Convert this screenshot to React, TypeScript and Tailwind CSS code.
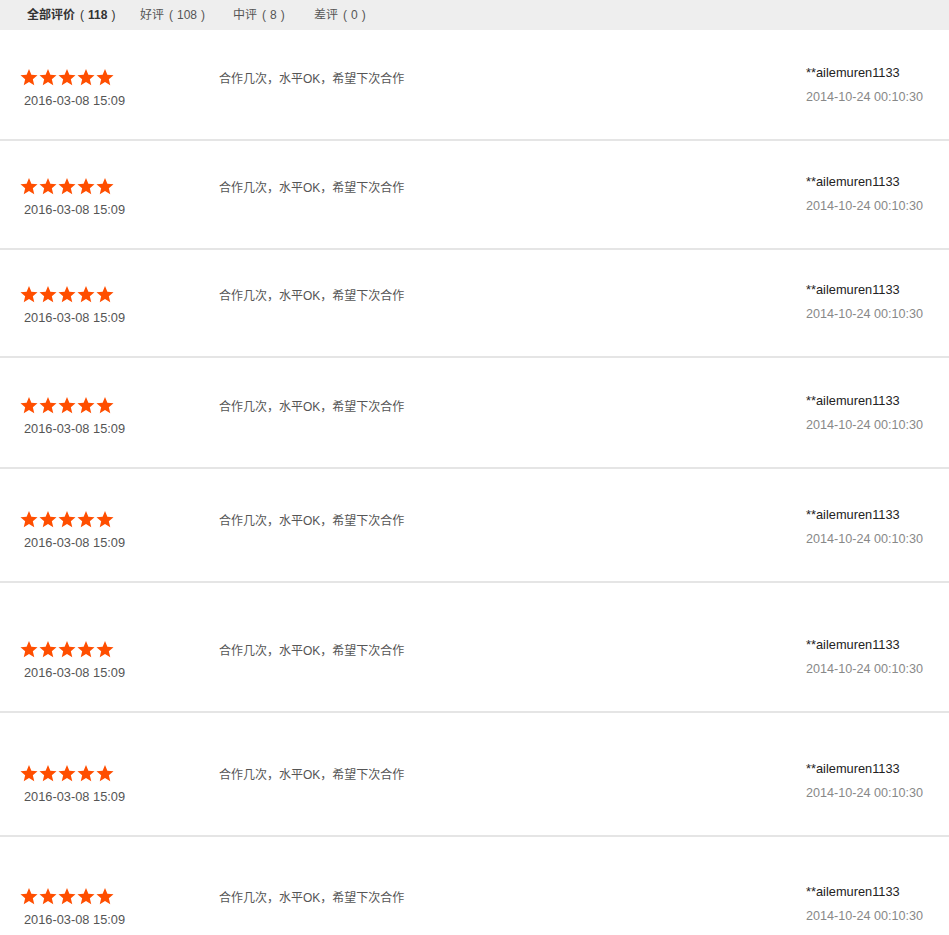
import React from "react";

const rows = [
  { h: "h-[111px]", pt: "pt-[34px]" },
  { h: "h-[109px]", pt: "pt-[32px]" },
  { h: "h-[108px]", pt: "pt-[31px]" },
  { h: "h-[111px]", pt: "pt-[34px]" },
  { h: "h-[114px]", pt: "pt-[37px]" },
  { h: "h-[130px]", pt: "pt-[53px]" },
  { h: "h-[124px]", pt: "pt-[47px]" },
  { h: "h-[124px]", pt: "pt-[46px]" },
];

const tabs = [
  { label: "全部评价", count: "118", w: "w-[113px]", active: true },
  { label: "好评", count: "108", w: "w-[93px]", active: false },
  { label: "中评", count: "8", w: "w-[81px]", active: false },
  { label: "差评", count: "0", w: "w-[80px]", active: false },
];

function Star() {
  return (
    <svg viewBox="0 0 20 19" className="w-[18px] h-[17px]">
      <polygon
        fill="#ff4e00"
        points="10,0 12.65,6.36 19.51,6.91 14.28,11.39 15.88,18.09 10,14.5 4.12,18.09 5.72,11.39 0.49,6.91 7.35,6.36"
      />
    </svg>
  );
}

export default function App() {
  return (
    <div
      className="w-[949px] min-h-screen bg-white overflow-hidden"
      style={{ fontFamily: '"Liberation Sans", "Noto Sans CJK SC", sans-serif' }}
    >
      {/* tabs */}
      <div className="h-[30px] bg-[#eeeeee] flex items-center pl-[27px] text-[12px] text-[#555]">
        {tabs.map((t) => (
          <span
            key={t.label}
            className={`${t.w} whitespace-nowrap ${t.active ? "font-bold text-[#333]" : ""}`}
          >
            {t.label}
            <span className="ml-[5px] mr-[4px] font-normal">(</span>
            {t.count}
            <span className="ml-[4px] font-normal">)</span>
          </span>
        ))}
      </div>

      {rows.map((r, i) => (
        <div
          key={i}
          className={`${r.h} ${r.pt} border-b-2 border-[#e5e5e5] flex items-start`}
        >
          <div className="w-[219px] pl-5 mt-[5px] flex-none">
            <div className="flex gap-px">
              <Star />
              <Star />
              <Star />
              <Star />
              <Star />
            </div>
            <div className="mt-[7px] ml-1 text-[12.8px] leading-4 text-[#555]">
              2016-03-08 15:09
            </div>
          </div>
          <div className="flex-1 mt-[7px] text-[12px] leading-4 text-[#555]">
            合作几次，水平OK，希望下次合作
          </div>
          <div className="w-[143px] flex-none mt-px">
            <div className="text-[12.8px] leading-4 text-[#222]">**ailemuren1133</div>
            <div className="mt-2 text-[12.6px] leading-4 text-[#888]">2014-10-24 00:10:30</div>
          </div>
        </div>
      ))}
    </div>
  );
}
